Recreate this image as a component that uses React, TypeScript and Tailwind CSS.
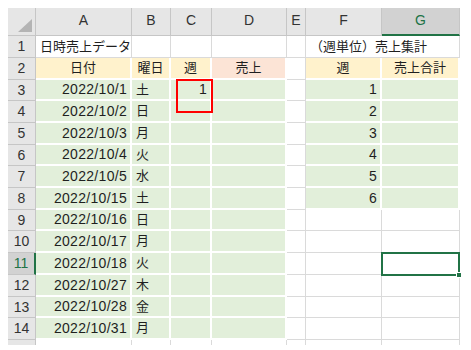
import React from 'react';

type Kind = 'plain' | 'green' | 'yellow' | 'peach' | 'open';
type Align = 'l' | 'c' | 'r';

type Cell = {
  t?: string;
  kind?: Kind;
  align?: Align;
  num?: boolean;
  mark?: 'red' | 'sel';
};

const COLS = ['A', 'B', 'C', 'D', 'E', 'F', 'G'];

const sales: [string, string][] = [
  ['2022/10/1', '土'],
  ['2022/10/2', '日'],
  ['2022/10/3', '月'],
  ['2022/10/4', '火'],
  ['2022/10/5', '水'],
  ['2022/10/15', '土'],
  ['2022/10/16', '日'],
  ['2022/10/17', '月'],
  ['2022/10/18', '火'],
  ['2022/10/27', '木'],
  ['2022/10/28', '金'],
  ['2022/10/31', '月'],
];

const buildRows = (): Cell[][] => {
  const rows: Cell[][] = [];
  rows.push([
    { t: '日時売上データ', align: 'l' },
    {},
    {},
    {},
    {},
    { t: '（週単位）売上集計', align: 'l', kind: 'open' },
    {},
  ]);
  rows.push([
    { t: '日付', kind: 'yellow', align: 'c' },
    { t: '曜日', kind: 'yellow', align: 'c' },
    { t: '週', kind: 'yellow', align: 'c' },
    { t: '売上', kind: 'peach', align: 'c' },
    {},
    { t: '週', kind: 'yellow', align: 'c' },
    { t: '売上合計', kind: 'yellow', align: 'c' },
  ]);
  sales.forEach(([date, day], i) => {
    const inSummary = i < 6;
    rows.push([
      { t: date, kind: 'green', align: 'r', num: true },
      { t: day, kind: 'green', align: 'l' },
      i === 0 ? { t: '1', kind: 'green', align: 'r', num: true, mark: 'red' } : { kind: 'green' },
      { kind: 'green' },
      {},
      inSummary ? { t: String(i + 1), kind: 'green', align: 'r', num: true } : {},
      inSummary ? { kind: 'green' } : i === 8 ? { mark: 'sel' } : {},
    ]);
  });
  return rows;
};

const kindClass: Record<Kind, string> = {
  plain: 'border-r border-b border-[#dadada]',
  open: 'border-b border-[#dadada]',
  green: 'bg-[#e2efda] border-r-2 border-b-2 border-white',
  yellow: 'bg-[#fff2cc] border-r-2 border-b-2 border-white',
  peach: 'bg-[#fce4d6] border-r-2 border-b-2 border-white',
};

const alignClass: Record<Align, string> = {
  l: 'justify-start pl-[4px]',
  c: 'justify-center',
  r: 'justify-end pr-[3px]',
};

const SheetCell = ({ cell }: { cell: Cell }) => {
  const kind = cell.kind ?? 'plain';
  return (
    <div
      className={`relative flex items-center whitespace-nowrap ${kindClass[kind]} ${
        alignClass[cell.align ?? 'l']
      } ${cell.num ? 'text-[14px] tracking-[0.3px]' : ''}`}
    >
      {cell.t}
      {cell.mark === 'red' && (
        <div className="absolute z-10 left-[5px] top-[-1px] w-[37px] h-[34px] border-2 border-[#ff0000]" />
      )}
      {cell.mark === 'sel' && (
        <div className="absolute z-10 left-[-1px] top-[-1px] right-[-1px] bottom-[-2px] border-2 border-[#217346]">
          <div className="absolute right-[-4px] bottom-[-4px] w-[6px] h-[6px] bg-[#217346] border border-white" />
        </div>
      )}
    </div>
  );
};

const CornerCell = () => (
  <div className="relative bg-[#e6e6e6] border-r border-b border-[#c6c6c6]">
    <svg className="absolute right-[3px] bottom-[3px]" width="14" height="13" viewBox="0 0 14 13">
      <polygon points="14,0 14,13 0,13" fill="#b4b4b4" />
    </svg>
  </div>
);

export default function App() {
  const rows = buildRows();

  return (
    <div className="w-[471px] h-[350px] bg-white overflow-hidden pl-[8px] pt-[8px] text-[13px] text-[#1f1f1f] font-['Liberation_Sans','Noto_Sans_CJK_JP',sans-serif]">
      <div className="grid grid-cols-[28px_96px_39px_41px_75px_19px_76px_78px] grid-rows-[28px_22px_22px_21px_22px_22px_21px_22px_22px_21px_22px_22px_22px_21px_22px_5px] w-[452px]">
        <CornerCell />
        {COLS.map((c) =>
          c === 'G' ? (
            <div
              key={c}
              className="flex items-end justify-center pb-[3px] text-[14px] bg-[#d2d2d2] text-[#217346] border-r border-[#c6c6c6] border-b-2 border-b-[#217346]"
            >
              {c}
            </div>
          ) : (
            <div
              key={c}
              className="flex items-end justify-center pb-[4px] text-[14px] bg-[#e6e6e6] text-[#333] border-r border-b border-[#c6c6c6]"
            >
              {c}
            </div>
          ),
        )}

        {rows.map((row, r) => (
          <React.Fragment key={r}>
            {r === 10 ? (
              <div className="flex items-center justify-center text-[14px] bg-[#d2d2d2] text-[#217346] border-b border-[#c6c6c6] border-r-2 border-r-[#217346]">
                {r + 1}
              </div>
            ) : (
              <div className="flex items-center justify-center text-[14px] bg-[#e6e6e6] text-[#333] border-r border-b border-[#c6c6c6]">
                {r + 1}
              </div>
            )}
            {row.map((cell, c) => (
              <SheetCell key={c} cell={cell} />
            ))}
          </React.Fragment>
        ))}

        {/* row 15, cut off at the bottom edge */}
        <div className="bg-[#e6e6e6] border-r border-[#c6c6c6]" />
        {COLS.map((c) => (
          <div key={c} className="border-r border-[#dadada]" />
        ))}
      </div>
    </div>
  );
}
